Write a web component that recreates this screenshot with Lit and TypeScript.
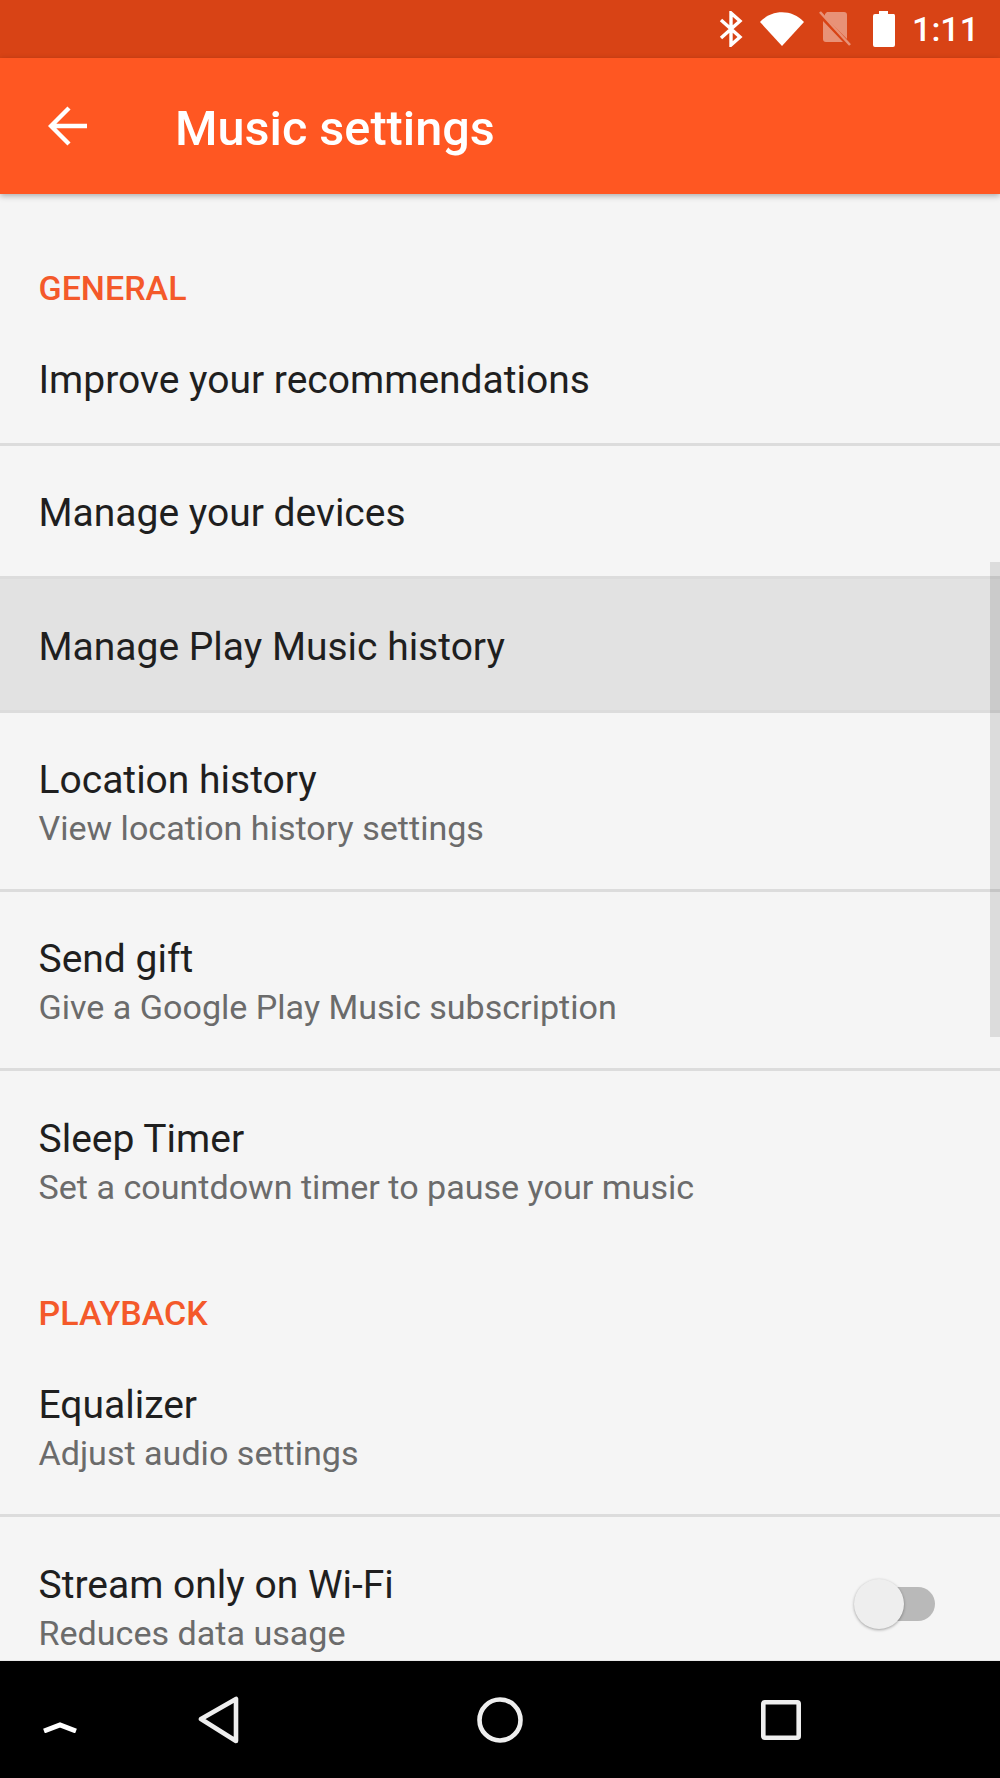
import { LitElement, html, css, nothing } from "lit";
import { customElement } from "lit/decorators.js";

type Row = { title: string; sub?: string; pressed?: boolean; toggle?: boolean; last?: boolean };

const general: Row[] = [
  { title: "Improve your recommendations" },
  { title: "Manage your devices" },
  { title: "Manage Play Music history", pressed: true },
  { title: "Location history", sub: "View location history settings" },
  { title: "Send gift", sub: "Give a Google Play Music subscription" },
  { title: "Sleep Timer", sub: "Set a countdown timer to pause your music", last: true },
];

const playback: Row[] = [
  { title: "Equalizer", sub: "Adjust audio settings" },
  { title: "Stream only on Wi-Fi", sub: "Reduces data usage", toggle: true, last: true },
];

@customElement("app-root")
export class AppRoot extends LitElement {
  static styles = css`
    :host {
      display: flex;
      flex-direction: column;
      height: 1778px;
      overflow: hidden;
      font-family: Roboto, "Liberation Sans", sans-serif;
      background: #f5f5f5;
    }
    .status {
      flex: none;
      height: 58px;
      background: #d84315;
      display: flex;
      align-items: center;
      justify-content: flex-end;
      color: #fff;
    }
    .status svg {
      display: block;
      flex: none;
    }
    .clock {
      font-size: 34px;
      font-weight: 500;
      margin: 0 21px 0 16px;
      line-height: 58px;
    }
    .appbar {
      flex: none;
      height: 136px;
      background: #ff5722;
      display: flex;
      align-items: center;
      color: #fff;
      box-shadow: 0 2px 6px rgba(0, 0, 0, 0.3);
      position: relative;
      z-index: 1;
    }
    .appbar svg {
      margin-left: 48px;
      flex: none;
    }
    .appbar h1 {
      margin: 4px 0 0 87px;
      font-size: 48.6px;
      font-weight: 500;
    }
    .list {
      flex: 1;
      min-height: 0;
      overflow: hidden;
      position: relative;
    }
    .head {
      color: #f4592a;
      font-size: 34px;
      font-weight: 500;
      padding: 0 38.5px 4px;
      line-height: 40px;
    }
    .head.first {
      padding-top: 74px;
    }
    .head.second {
      padding-top: 43px;
      padding-bottom: 5px;
    }
    .row {
      display: flex;
      align-items: center;
      padding: 5px 38.5px 0;
      box-sizing: border-box;
      border-bottom: 3px solid #dcdcdc;
      min-height: 133.5px;
    }
    .row.sub {
      min-height: 179px;
      padding-top: 6px;
    }
    .row.last {
      border-bottom: none;
    }
    .row.pressed {
      background: #e2e2e2;
    }
    .text {
      flex: 1;
    }
    .title {
      font-size: 39px;
      line-height: 48px;
      color: #1f1f1f;
    }
    .subtitle {
      font-size: 34.1px;
      line-height: 48px;
      color: #6b6b6b;
    }
    .switch {
      position: relative;
      width: 80px;
      height: 34px;
      margin: 0 26.5px 10px 0;
      border-radius: 17px;
      background: #b9b9b9;
    }
    .thumb {
      position: absolute;
      left: -1px;
      top: -8px;
      width: 50px;
      height: 50px;
      border-radius: 50%;
      background: #eeeeee;
      box-shadow: 0 1px 3px rgba(0, 0, 0, 0.35);
    }
    .scrollbar {
      position: absolute;
      right: 0;
      top: 368px;
      width: 10px;
      height: 475px;
      background: rgba(0, 0, 0, 0.1);
    }
    .nav {
      flex: none;
      height: 118px;
      background: #000;
      border-top: 1px solid #e8e8e8;
      box-sizing: border-box;
      display: grid;
      grid-template-columns: 119px 200px 362px 200px;
      align-items: center;
      position: relative;
      z-index: 1;
    }
    .nav svg {
      display: block;
      justify-self: center;
    }
    .nav .recents-up {
      margin-top: 14px;
    }
  `;

  private renderRow(r: Row) {
    return html`
      <div class="row ${r.sub ? "sub" : ""} ${r.pressed ? "pressed" : ""} ${r.last ? "last" : ""}">
        <div class="text">
          <div class="title">${r.title}</div>
          ${r.sub ? html`<div class="subtitle">${r.sub}</div>` : nothing}
        </div>
        ${r.toggle ? html`<div class="switch"><div class="thumb"></div></div>` : nothing}
      </div>
    `;
  }

  render() {
    return html`
      <div class="status">
        <svg width="24" height="36" viewBox="0 0 24 36" fill="none" stroke="#fff" stroke-width="3.4">
          <path d="M2 9l19 17-9 8V2l9 8L2 27" />
        </svg>
        <svg style="margin-left:17px" width="44" height="34" viewBox="0 0 44 34" fill="#fff">
          <path d="M0 10C12-3 32-3 44 10L22 34z" />
        </svg>
        <svg style="margin-left:15px" width="32" height="36" viewBox="0 0 32 36" opacity="0.42">
          <path fill="#fff" d="M8 1h17a3 3 0 0 1 3 3v24L6 6V3zM4 10l20 21H7a3 3 0 0 1-3-3z" />
          <path stroke="#fff" stroke-width="2.6" d="M1 1l30 33" />
        </svg>
        <svg style="margin-left:21px" width="24" height="36" viewBox="0 0 24 36" fill="#fff">
          <path d="M7 0h9v3h6a2 2 0 0 1 1 2v29a2 2 0 0 1-2 2H3a2 2 0 0 1-2-2V5a2 2 0 0 1 2-2h4z" />
        </svg>
        <span class="clock">1:11</span>
      </div>
      <div class="appbar">
        <svg width="40" height="40" viewBox="0 0 40 40" fill="none" stroke="#fff" stroke-width="4.4">
          <path d="M39 20H3M21 2L3 20l18 18" />
        </svg>
        <h1>Music settings</h1>
      </div>
      <div class="list">
        <div class="head first">GENERAL</div>
        ${general.map((r) => this.renderRow(r))}
        <div class="head second">PLAYBACK</div>
        ${playback.map((r) => this.renderRow(r))}
        <div class="scrollbar"></div>
      </div>
      <div class="nav">
        <svg class="recents-up" width="34" height="12" viewBox="0 0 34 12" fill="none" stroke="#fff" stroke-width="5">
          <path d="M1 10l16-6 16 6" />
        </svg>
        <svg width="42" height="48" viewBox="0 0 42 48" fill="none" stroke="#eee" stroke-width="4.6" stroke-linejoin="round">
          <path d="M38 3v42L3 23z" />
        </svg>
        <svg width="46" height="46" viewBox="0 0 46 46" fill="none" stroke="#eee" stroke-width="4.6">
          <circle cx="23" cy="23" r="20.5" />
        </svg>
        <svg width="40" height="40" viewBox="0 0 40 40" fill="none" stroke="#eee" stroke-width="4.6" stroke-linejoin="round">
          <rect x="2.3" y="2.3" width="35.4" height="35.4" rx="1.5" />
        </svg>
      </div>
    `;
  }
}
